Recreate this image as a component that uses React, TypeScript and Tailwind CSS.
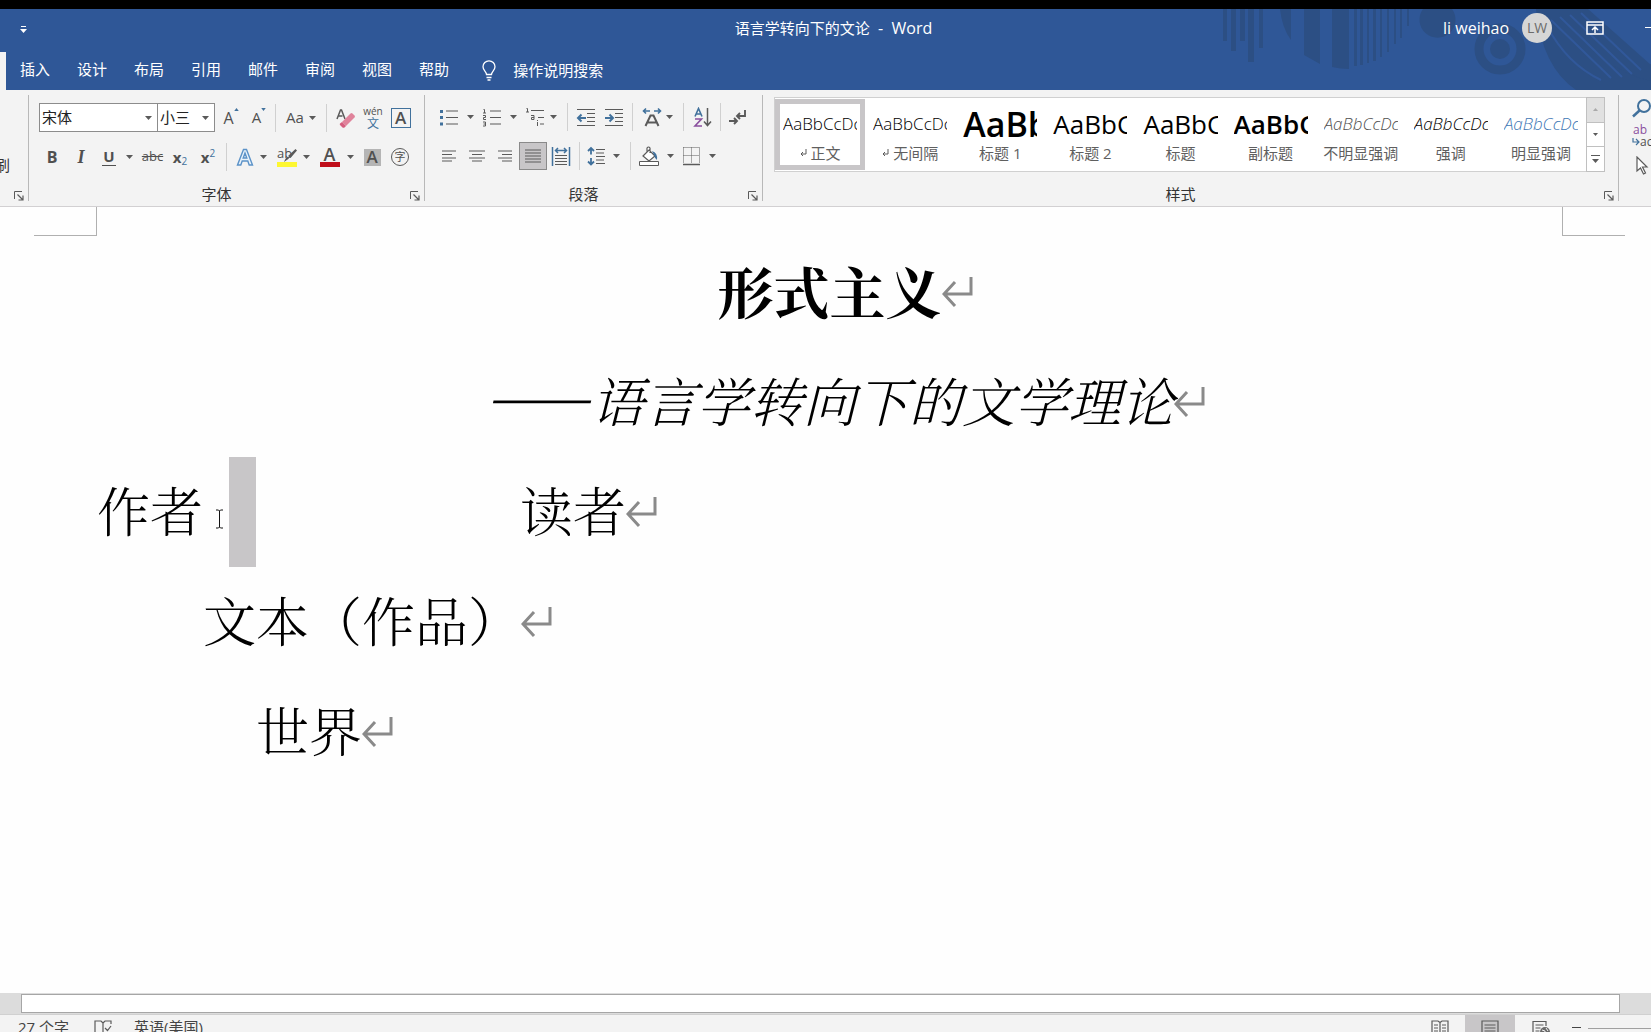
import React from 'react';

const TABS = ['插入', '设计', '布局', '引用', '邮件', '审阅', '视图', '帮助'];

const STYLES = [
  { name: '正文', sample: 'AaBbCcDc', mark: true, look: 'text-[17px] font-light text-black' },
  { name: '无间隔', sample: 'AaBbCcDc', mark: true, look: 'text-[17px] font-light text-black' },
  { name: '标题 1', sample: 'AaBb', look: 'text-[34px] font-semibold text-black' },
  { name: '标题 2', sample: 'AaBbC', look: 'text-[26px] text-black' },
  { name: '标题', sample: 'AaBbC', look: 'text-[26px] text-black' },
  { name: '副标题', sample: 'AaBbC', look: 'text-[26px] font-semibold text-black' },
  { name: '不明显强调', sample: 'AaBbCcDc', look: 'text-[17px] font-light italic text-[#505050]' },
  { name: '强调', sample: 'AaBbCcDc', look: 'text-[17px] font-light italic text-black' },
  { name: '明显强调', sample: 'AaBbCcDc', look: 'text-[17px] font-light italic text-[#3f78b5]' },
];

type Box = React.PropsWithChildren<{ w?: number; h?: number; className?: string }>;

function Svg({ w = 20, h = 20, className = '', children }: Box) {
  return (
    <svg width={w} height={h} viewBox={`0 0 ${w} ${h}`} fill="none" stroke="#5a5a5a" strokeWidth="1.5" className={`shrink-0 ${className}`} aria-hidden="true">
      {children}
    </svg>
  );
}

function Caret({ className = '' }: { className?: string }) {
  return (
    <svg width="7" height="4" viewBox="0 0 7 4" fill="#5a5a5a" className={`shrink-0 ${className}`} aria-hidden="true">
      <path d="M0 0h7L3.5 4z" />
    </svg>
  );
}

function Btn({ label, className = 'w-7', children }: React.PropsWithChildren<{ label: string; className?: string }>) {
  return (
    <button type="button" aria-label={label} className={`flex h-7 shrink-0 items-center justify-center text-[#505050] ${className}`}>
      {children}
    </button>
  );
}

function Sep({ className = '' }: { className?: string }) {
  return <span className={`h-7 w-px shrink-0 bg-[#d0d0d0] ${className}`} />;
}

function Launcher() {
  return (
    <button type="button" aria-label="更多选项" className="mt-[3px] ml-auto">
      <Svg w={10} h={10}>
        <path d="M.5 8V.5H8" strokeWidth="1" />
        <path d="M3.5 3.5l5 5M9 4.5V9H4.5" strokeWidth="1.2" />
      </Svg>
    </button>
  );
}

function GroupFooter({ title }: { title: string }) {
  return (
    <footer className="mt-auto flex h-6 items-center gap-[6px] pr-1">
      <span className="flex-1 text-center text-[15px] leading-5 text-[#333]">{title}</span>
      <Launcher />
    </footer>
  );
}

function Group({ title, className, children }: React.PropsWithChildren<{ title: string; className: string }>) {
  return (
    <section className={`flex shrink-0 flex-col pt-[13px] ${className}`}>
      {children}
      <GroupFooter title={title} />
    </section>
  );
}

function Divider() {
  return <span className="mt-[5px] h-[106px] w-px shrink-0 bg-[#b8b8b8]" />;
}

function Backdrop() {
  return (
    <svg width="471" height="81" viewBox="0 9 471 81" className="absolute top-0 right-0" fill="#2c4f84" aria-hidden="true">
      <path d="M43 9h4v32h-4zM51 9h5v42h-5zM60 9h5v32h-5zM68 9h6v53h-6zM79 9h4v39h-4z" />
      <path d="M100 9h11v31q-9-12-11-31zM124 9h16v55l-16-9zM152 9h17v60q-9 0-17-2z" />
      <path d="M174 9h3v57h-3zM180 9h3v56h-3zM187 9h2v54h-2zM193 9h3v52h-3zM200 9h2v48h-2zM207 9h2v43h-2zM214 9h2v35h-2zM220 9h2v29h-2zM227 9h2v17h-2z" />
      <path d="M243 9h29a18 18 0 1 1-29 0z" />
      <circle cx="320" cy="49" r="21" fill="none" stroke="#2c4f84" strokeWidth="9" />
      <circle cx="320" cy="49" r="10" />
      <path d="M356 9q6 58 40 81h75V64q-30 0-48-10L376 9z" />
      <path d="M376 9h32l63 56v16q-50-10-95-72z" />
      <g stroke="#31589a" strokeWidth="2" fill="none">
        <path d="M367 26q20 38 54 54M371 20l60 58M380 17l62 60M390 15l62 59M401 13l60 57" />
      </g>
    </svg>
  );
}

function TitleBar() {
  return (
    <div className="relative flex h-[43px] items-center pb-[6px] pl-4 text-[15px] text-white">
      <div className="flex-1">
        <button type="button" aria-label="自定义快速访问工具栏" className="block pt-1 pl-1">
          <svg width="7" height="8" viewBox="0 0 7 8" fill="#fff" aria-hidden="true">
            <path d="M1 0h5v1H1zM0 3h7L3.5 7z" />
          </svg>
        </button>
      </div>
      <h1 className="whitespace-pre">语言学转向下的文论<span className="text-[16px]">  -  Word</span></h1>
      <div className="flex flex-1 items-center justify-end overflow-hidden">
        <span className="text-[16px]">li weihao</span>
        <span className="ml-[13px] flex size-[30px] items-center justify-center rounded-full bg-[#d6d6d6] text-[14px] text-[#6b6b6b]">LW</span>
        <button type="button" aria-label="功能区显示选项" className="ml-[34px]">
          <Svg w={18} h={14} className="stroke-white">
            <path d="M1 1h16v12H1zM1 4h16" />
            <path d="M9 12V6M6 9l3-3 3 3" />
          </Svg>
        </button>
        <button type="button" aria-label="最小化" className="ml-[41px] w-[6px] overflow-hidden">
          <span className="block h-px w-[10px] bg-white" />
        </button>
      </div>
    </div>
  );
}

function TabBar() {
  return (
    <nav className="relative flex h-[38px] items-center text-[15px] text-white">
      <span className="h-full w-[6px] bg-[#f3f3f3]" />
      <div className="flex gap-[27px] pb-1 pl-[14px]">
        {TABS.map((tab) => (
          <button type="button" key={tab} className="leading-6">{tab}</button>
        ))}
      </div>
      <button type="button" className="ml-8 flex items-center gap-4 pb-[2px] leading-6">
        <Svg w={16} h={21} className="stroke-white">
          <path d="M5.500 14.500C5.500 11.500 2 10.500 2 6.800a6 6 0 0 1 12 0c0 3.700-3.500 4.700-3.500 7.700zM5.500 17.500h5M6.500 20h3" strokeWidth="1.300" />
        </Svg>
        操作说明搜索
      </button>
    </nav>
  );
}

function FontGroup() {
  return (
    <Group title="字体" className="w-[395px]">
      <div className="flex items-center pl-[10px]">
        <label className="relative flex h-[29px] w-[119px] items-center border border-[#8c8c8c] bg-white">
          <select aria-label="字体" className="h-full w-full appearance-none pl-[2px] text-[15px] text-[#222] outline-none">
            <option>宋体</option>
          </select>
          <Caret className="absolute right-[5px]" />
        </label>
        <label className="relative -ml-px flex h-[29px] w-[58px] items-center border border-[#8c8c8c] bg-white">
          <select aria-label="字号" className="h-full w-full appearance-none pl-[2px] text-[15px] text-[#222] outline-none">
            <option>小三</option>
          </select>
          <Caret className="absolute right-[5px]" />
        </label>
        <Btn label="增大字号" className="ml-[2px] w-7">
          <span className="text-[16px]">A</span>
          <svg width="5" height="3" viewBox="0 0 6 4" className="mb-4" aria-hidden="true"><path d="M0 4l3-4 3 4z" fill="#41719c" /></svg>
        </Btn>
        <Btn label="减小字号">
          <span className="text-[15px]">A</span>
          <svg width="5" height="3" viewBox="0 0 6 4" className="mb-4" aria-hidden="true"><path d="M0 0h6L3 4z" fill="#41719c" /></svg>
        </Btn>
        <Sep className="ml-[2px]" />
        <Btn label="更改大小写" className="w-[50px] gap-[5px]"><span className="text-[15px]">Aa</span><Caret /></Btn>
        <Sep />
        <Btn label="清除所有格式" className="ml-[5px] w-7">
          <Svg>
            <path d="M1 11L4.500 2h1L9 11M2.500 8h4" />
            <path d="M6 14l8.500-8.500q1-1 2 0l2 2q1 1 0 2L10 18z" fill="#e0839b" stroke="none" />
            <path d="M6 14l4 4-1.500 1.500q-1 .5-2 0L4 17q-.500-1 0-1.500z" fill="#d55f7f" stroke="none" />
          </Svg>
        </Btn>
        <Btn label="拼音指南" className="w-[26px] flex-col">
          <span className="text-[10px] leading-[11px]">wén</span>
          <span className="text-[12px] leading-[13px] text-[#41719c]">文</span>
        </Btn>
        <Btn label="字符边框" className="w-[29px]">
          <span className="flex size-5 items-center justify-center border border-[#41719c] text-[17px] font-semibold">A</span>
        </Btn>
      </div>
      <div className="mt-[11px] flex items-center pl-[9px]">
        <Btn label="加粗" className="w-[28px]"><b className="text-[16px]">B</b></Btn>
        <Btn label="倾斜" className="w-[30px]"><i className="font-['Liberation_Serif',serif] text-[18px] font-bold">I</i></Btn>
        <Btn label="下划线" className="w-[43px] gap-[10px]"><span className="border-b border-[#505050] px-px text-[15px] leading-[17px] font-bold">U</span><Caret /></Btn>
        <Btn label="删除线" className="w-[27px]"><s className="text-[13px]">abc</s></Btn>
        <Btn label="下标"><span className="text-[15px] font-bold">x</span><span className="mt-2 text-[10px] text-[#41719c]">2</span></Btn>
        <Btn label="上标"><span className="text-[15px] font-bold">x</span><span className="mb-2 text-[10px] text-[#41719c]">2</span></Btn>
        <Sep className="ml-1" />
        <Btn label="文本效果" className="ml-[2px] w-[43px] gap-[5px]">
          <Svg>
            <path d="M2.500 18L8.500 2.500h3L17.500 18h-3.300l-1.400-4H7.200l-1.400 4zM8.200 11h3.600L10 6z" stroke="#5b92c8" strokeWidth="1.400" fill="#eaf3fb" />
          </Svg>
          <Caret />
        </Btn>
        <Btn label="突出显示" className="w-[43px] gap-[6px]">
          <span className="flex w-5 flex-col">
            <span className="relative flex h-[15px] text-[13px] leading-[13px]">
              ab
              <svg width="13" height="13" viewBox="0 0 13 13" className="absolute right-0 bottom-0" aria-hidden="true"><path d="M13 1.500L6.500 9 4 7 11.500 0zM5 9.500L0 13q2-5 3.500-5z" fill="#5a5a5a" /></svg>
            </span>
            <span className="h-[5px] bg-[#fdf731]" />
          </span>
          <Caret />
        </Btn>
        <Btn label="字体颜色" className="w-[43px] gap-[7px]">
          <span className="flex w-5 flex-col items-center">
            <span className="text-[18px] leading-[15px] font-semibold">A</span>
            <span className="h-[5px] w-5 bg-[#c00f1b]" />
          </span>
          <Caret />
        </Btn>
        <Btn label="字符底纹">
          <span className="flex h-[17px] w-[17px] items-center justify-center bg-[#b5b5b5] text-[17px] font-semibold">A</span>
        </Btn>
        <Btn label="带圈字符">
          <span className="flex size-[18px] items-center justify-center rounded-full border border-[#5a5a5a] text-[11px]">字</span>
        </Btn>
      </div>
    </Group>
  );
}

function ParagraphGroup() {
  return (
    <Group title="段落" className="w-[337px]">
      <div className="flex items-center pl-[10px]">
        <Btn label="项目符号" className="w-[43px] gap-2">
          <Svg>
            <path d="M7 4h12M7 10.500h12M7 17h12" strokeWidth="1.200" />
            <path d="M1 3h3v3H1zM1 9h3v3H1zM1 15.500h3v3H1z" fill="#41719c" stroke="none" />
          </Svg>
          <Caret />
        </Btn>
        <Btn label="编号" className="w-[42px] gap-2">
          <Svg>
            <path d="M8 4h11M8 10.500h11M8 17h11" strokeWidth="1.200" />
            <path d="M1.500 2.500h1V6M1 6h3M1 8.500h2.500v2H1.500v2H4M1 15h2.500v4H1M1.500 17h2" strokeWidth="1" />
          </Svg>
          <Caret />
        </Btn>
        <Btn label="多级列表" className="w-[41px] gap-[5px]">
          <Svg>
            <path d="M6 3.500h13M13 10.500h6M15 17h4" strokeWidth="1.200" />
            <path d="M1.500 1.500h1V5M1 5h3M6 8.500h3v4H6.500v-2H9M12.500 15v4M12.500 13v1" strokeWidth="1" />
          </Svg>
          <Caret />
        </Btn>
        <Sep className="ml-[6px]" />
        <Btn label="减少缩进量" className="ml-1 w-7">
          <Svg>
            <path d="M1 2.500h18M11 6.500h8M11 10.500h8M11 14.500h8M1 18.500h18" strokeWidth="1.200" />
            <path d="M10 11H2.500M5.500 7.500L2 11l3.500 3.500" stroke="#41719c" strokeWidth="2" />
          </Svg>
        </Btn>
        <Btn label="增加缩进量">
          <Svg>
            <path d="M1 2.500h18M11 6.500h8M11 10.500h8M11 14.500h8M1 18.500h18" strokeWidth="1.200" />
            <path d="M1 11h7.500M5.500 7.500L9 11l-3.500 3.500" stroke="#41719c" strokeWidth="2" />
          </Svg>
        </Btn>
        <Sep className="ml-1" />
        <Btn label="中文版式" className="ml-1 w-10 gap-1">
          <Svg>
            <path d="M3.500 19l5-10.500h3l5 10.500M6 15.500h8" strokeWidth="2" />
            <path d="M8 4H1.500M4 1.500L1.500 4 4 6.500M12 4h6.500M16 1.500L18.500 4 16 6.500" stroke="#41719c" strokeWidth="1.600" />
          </Svg>
          <Caret />
        </Btn>
        <Sep className="ml-[6px]" />
        <Btn label="排序" className="ml-[5px] w-7">
          <Svg>
            <path d="M2 9.500L5.500 1.500 9 9.500M3.200 7h4.600" stroke="#41719c" strokeWidth="1.600" />
            <path d="M2 12h6.500L2 19h7" stroke="#8a4f9e" strokeWidth="1.600" />
            <path d="M14.500 1v17M11 14.500l3.500 4 3.500-4" />
          </Svg>
        </Btn>
        <Sep className="ml-[3px]" />
        <Btn label="显示编辑标记" className="ml-[2px] w-7">
          <Svg>
            <path d="M18 3v6h-8M13 6l-3 3 3 3" strokeWidth="1.900" />
            <path d="M2 14h8M7 11l3 3-3 3" strokeWidth="1.900" />
          </Svg>
        </Btn>
      </div>
      <div className="mt-[11px] flex items-center pl-[10px]">
        <Btn label="左对齐"><Svg w={16} h={12}><path d="M1 1h14M1 4.500h10M1 8h14M1 11h10" strokeWidth="1.200" /></Svg></Btn>
        <Btn label="居中"><Svg w={16} h={12}><path d="M0 1h16M3 4.500h10M0 8h16M3 11h10" strokeWidth="1.200" /></Svg></Btn>
        <Btn label="右对齐"><Svg w={16} h={12}><path d="M1 1h14M5 4.500h10M1 8h14M5 11h10" strokeWidth="1.200" /></Svg></Btn>
        <Btn label="两端对齐" className="w-7 border border-[#8a8a8a] bg-[#c8c6c8]">
          <Svg w={16} h={14}><path d="M0 1h16M0 4h16M0 7h16M0 10h16M0 13h16" strokeWidth="1.200" /></Svg>
        </Btn>
        <Btn label="分散对齐">
          <Svg>
            <path d="M1.500 1v19M18.500 1v19M5 4.500h10M7 2L4.500 4.500 7 7M13 2l2.500 2.500L13 7" stroke="#41719c" />
            <path d="M4 9.500h12M4 12.500h12M4 15.500h12M4 18.500h12" strokeWidth="1.200" />
          </Svg>
        </Btn>
        <Sep className="ml-1" />
        <Btn label="行距" className="ml-[3px] w-[41px] gap-[6px]">
          <Svg>
            <path d="M4 2v6.500M4 12v6.500M1 5l3-3 3 3M1 15.500l3 3 3-3" stroke="#41719c" strokeWidth="1.800" />
            <path d="M9 3.500h9M9 7h8M9 10.500h9M9 14h8M9 17.500h9" strokeWidth="1.200" />
          </Svg>
          <Caret />
        </Btn>
        <Sep className="ml-[6px]" />
        <Btn label="底纹" className="ml-1 w-[43px] gap-2">
          <Svg>
            <path d="M4 10l6-6 6 6-6 5zM8 7V2q1.500-2 3 0v5" strokeWidth="1.200" fill="#fff" />
            <path d="M13 5q6 2 5 9-2-1-3-5z" fill="#41719c" stroke="none" />
            <path d="M.500 15.500h19v4H.500z" fill="#fff" strokeWidth="1" />
          </Svg>
          <Caret />
        </Btn>
        <Btn label="边框" className="w-[42px] gap-[7px]">
          <Svg>
            <path d="M1.500 1.500h16v16M1.500 1.500v16M9.500 1.500v16M1.500 9.500h16" strokeWidth="1" strokeDasharray="1 1" />
            <path d="M1 18.500h17" />
          </Svg>
          <Caret />
        </Btn>
      </div>
    </Group>
  );
}

function StylesGroup() {
  return (
    <section className="flex min-w-0 flex-1 flex-col pt-[7px]">
      <div className="mr-[13px] ml-[11px] flex h-[75px] border border-[#d0d0d0] bg-white">
        <div className="flex min-w-0 flex-1 items-center">
          {STYLES.map((s, i) => (
            <button
              type="button"
              key={s.name}
              className={`flex h-[71px] min-w-0 flex-1 flex-col border-5 px-[3px] pt-1 ${i === 0 ? 'border-[#c8c6c8]' : 'border-transparent'}`}
            >
              <span className={`flex h-[32px] w-full items-center overflow-hidden leading-[32px] whitespace-nowrap ${s.look}`}>{s.sample}</span>
              <span className="mt-[3px] flex h-5 w-full items-center justify-center gap-1 text-[15px] leading-5 whitespace-nowrap text-[#5f5f5f]">
                {s.mark && <Svg w={7} h={8}><path d="M6 0v5H1M3 3L1 5l2 2" strokeWidth="1" /></Svg>}
                {s.name}
              </span>
            </button>
          ))}
        </div>
        <div className="-my-px -mr-px flex w-[19px] flex-col border border-[#c0c0c0]">
          <button type="button" aria-label="上一行" className="flex flex-1 items-center justify-center bg-[#e1e1e1]">
            <svg width="5" height="3" viewBox="0 0 5 3" aria-hidden="true"><path d="M0 3l2.500-3L5 3z" fill="#aaa" /></svg>
          </button>
          <button type="button" aria-label="下一行" className="flex flex-1 items-center justify-center border-y border-[#c0c0c0]">
            <svg width="5" height="3" viewBox="0 0 5 3" aria-hidden="true"><path d="M0 0h5L2.500 3z" fill="#5a5a5a" /></svg>
          </button>
          <button type="button" aria-label="其他样式" className="flex flex-1 flex-col items-center justify-center gap-[3px]">
            <span className="h-px w-[9px] bg-[#5a5a5a]" />
            <Caret />
          </button>
        </div>
      </div>
      <GroupFooter title="样式" />
    </section>
  );
}

function EditingGroup() {
  return (
    <section className="flex w-8 shrink-0 flex-col gap-[6px] overflow-hidden pt-[8px] pl-[13px]">
      <button type="button" aria-label="查找">
        <Svg w={22}><circle cx="12" cy="8" r="6" stroke="#41719c" strokeWidth="2" /><path d="M7.500 12.500L1 18.500" stroke="#41719c" strokeWidth="2.500" /></Svg>
      </button>
      <button type="button" aria-label="替换" className="flex h-[26px] flex-col items-start text-[12px] leading-[12px] text-[#505050]">
        <span className="pl-px text-[#8a4f9e]">ab</span>
        <span className="flex items-center"><Svg w={8} h={8}><path d="M1 0v4h6M4 1l3 3-3 3" stroke="#41719c" strokeWidth="1.200" /></Svg>ac</span>
      </button>
      <button type="button" aria-label="选择" className="pl-[4px]">
        <Svg w={13} h={20}><path d="M1 1v14l3.500-3 3 6 2-1-3-6H11z" fill="#fff" strokeWidth="1.200" /></Svg>
      </button>
    </section>
  );
}

function Ribbon() {
  return (
    <div className="flex h-[117px] shrink-0 overflow-hidden border-b border-[#d2d0d2] bg-[#f3f3f3]">
      <section className="flex w-7 shrink-0 flex-col justify-between pt-[65px]">
        <span className="flex h-5 w-[10px] justify-end overflow-hidden text-[15px] leading-5 text-[#333]">刷</span>
        <div className="flex h-6 items-center pr-1"><Launcher /></div>
      </section>
      <Divider />
      <FontGroup />
      <Divider />
      <ParagraphGroup />
      <Divider />
      <StylesGroup />
      <Divider />
      <EditingGroup />
    </div>
  );
}

// Paragraph mark takes no width, so centred lines stay centred on their text
function Mark() {
  return (
    <span className="flex w-0 pt-1">
      <Svg w={32} h={32}>
        <path d="M29 1v17H2M13 6L2 18l11 12" stroke="#8a8a8a" strokeWidth="3" />
      </Svg>
    </span>
  );
}

function Line({ className = '', children }: React.PropsWithChildren<{ className?: string }>) {
  return <p className={`flex h-[110px] items-center pb-1 whitespace-nowrap ${className}`}>{children}<Mark /></p>;
}

function Page() {
  return (
    <main className="min-h-0 flex-1 overflow-hidden bg-[#fefefe]">
      <div className="flex h-[30px] items-start justify-between pr-[26px] pl-[34px]">
        <span className="h-[29px] w-[63px] border-r border-b border-[#b0b0b0]" />
        <span className="h-[29px] w-[63px] border-b border-l border-[#b0b0b0]" />
      </div>
      <article lang="zh-CN" className="pr-[89px] pl-[97px] font-['SimSun','Noto_Serif_CJK_SC','Noto_Sans_CJK_SC',serif] text-[53px] font-light text-black">
        <Line className="justify-center text-[56px] font-bold">形式主义</Line>
        <Line className="justify-center italic">
          <span className="flex w-[106px] justify-center pb-[18px] text-[62px] font-extralight">——</span>
          语言学转向下的文学理论
        </Line>
        <Line>
          作者
          <span className="relative h-full w-[26px]">
            <Svg w={9} h={20} className="absolute top-[52px] left-[12px]">
              <path d="M1 1h2.500l1 1 1-1H8M4.500 2v16M1 19h2.500l1-1 1 1H8" stroke="#111" strokeWidth="1" />
            </Svg>
          </span>
          <span className="mr-[264px] -mb-1 h-[110px] w-[27px] bg-[#c8c6c8]" />
          读者
        </Line>
        <Line className="pl-[106px]">文本（作品）</Line>
        <Line className="pl-[159px]">世界</Line>
      </article>
    </main>
  );
}

function StatusBar() {
  return (
    <footer className="flex h-[18px] shrink-0 items-start overflow-hidden border-t border-[#d0d0d0] bg-[#f3f3f3] text-[15px] leading-6 text-[#444]">
      <span className="pl-[18px]">27 个字</span>
      <button type="button" aria-label="校对" className="mt-[5px] ml-[25px]">
        <Svg w={18} h={18}><path d="M9 3v14M9 3L7 1H1v15h6l2 1.500M9 3l2-2h6v3M17 12v4h-6M11 8l2.500 2.500L17 6" strokeWidth="1.200" /></Svg>
      </button>
      <span className="ml-[22px]">英语(美国)</span>
      <div className="ml-auto flex items-start">
        <button type="button" aria-label="阅读视图" className="flex h-6 w-[50px] justify-center pt-[5px]">
          <Svg w={18} h={18}><path d="M9 2v16M1 1h6l2 1.500L11 1h6v15H1zM3 5h4M3 8h4M3 11h4M11 5h4M11 8h4M11 11h4" strokeWidth="1.200" /></Svg>
        </button>
        <button type="button" aria-label="页面视图" className="flex h-6 w-[50px] justify-center bg-[#c8c6c8] pt-[5px]">
          <Svg w={18} h={18}><path d="M1 1h16v18H1zM3.500 5h11M3.500 8h11M3.500 11h11" strokeWidth="1.200" /></Svg>
        </button>
        <button type="button" aria-label="Web 版式视图" className="flex h-6 w-[52px] justify-center pt-[5px]">
          <Svg w={18} h={18}><path d="M1 18V1.500h13V6M3.500 5h8M3.500 8h5M3.500 11h4" strokeWidth="1.200" /><circle cx="13" cy="12" r="5" fill="#6a6a6a" stroke="none" /><path d="M10 10l3 1v3M14 8l2 3" stroke="#f3f3f3" strokeWidth="1" /></Svg>
        </button>
        <button type="button" aria-label="缩小" className="mt-3 ml-[5px] h-px w-[9px] bg-[#444]" />
        <span className="mt-[13px] ml-[7px] h-px w-[63px] bg-[#a0a0a0]" />
      </div>
    </footer>
  );
}

export default function App() {
  return (
    <div className="flex h-screen flex-col overflow-hidden bg-white font-['Open_Sans','Noto_Sans_CJK_SC',sans-serif]">
      <div className="h-[9px] shrink-0 bg-black" />
      <header className="relative shrink-0 bg-[#2f5797]">
        <Backdrop />
        <TitleBar />
        <TabBar />
      </header>
      <Ribbon />
      <Page />
      <div className="flex h-[21px] shrink-0 bg-[#dcdcdc] pt-px pr-[31px] pb-px pl-[21px]">
        <div className="flex-1 border border-[#a6a6a6] bg-white" />
      </div>
      <StatusBar />
    </div>
  );
}
